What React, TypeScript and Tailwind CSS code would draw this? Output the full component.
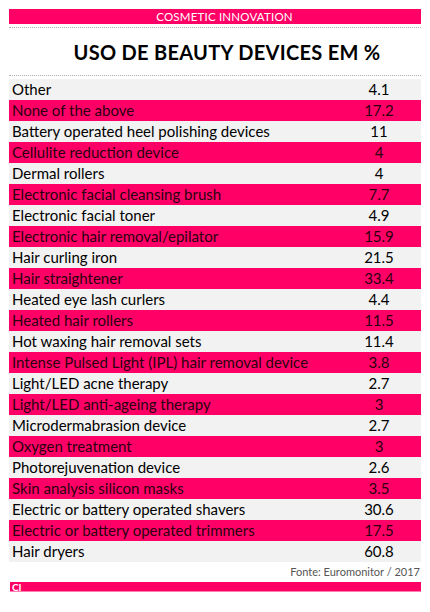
import React from "react";

const rows: [string, string][] = [
  ["Other", "4.1"],
  ["None of the above", "17.2"],
  ["Battery operated heel polishing devices", "11"],
  ["Cellulite reduction device", "4"],
  ["Dermal rollers", "4"],
  ["Electronic facial cleansing brush", "7.7"],
  ["Electronic facial toner", "4.9"],
  ["Electronic hair removal/epilator", "15.9"],
  ["Hair curling iron", "21.5"],
  ["Hair straightener", "33.4"],
  ["Heated eye lash curlers", "4.4"],
  ["Heated hair rollers", "11.5"],
  ["Hot waxing hair removal sets", "11.4"],
  ["Intense Pulsed Light (IPL) hair removal device", "3.8"],
  ["Light/LED acne therapy", "2.7"],
  ["Light/LED anti-ageing therapy", "3"],
  ["Microdermabrasion device", "2.7"],
  ["Oxygen treatment", "3"],
  ["Photorejuvenation device", "2.6"],
  ["Skin analysis silicon masks", "3.5"],
  ["Electric or battery operated shavers", "30.6"],
  ["Electric or battery operated trimmers", "17.5"],
  ["Hair dryers", "60.8"],
];

export default function App() {
  return (
    <div className="w-[430px] h-[612px] bg-white pt-[9px] px-[9px]">
      <div className="h-[15px] bg-[#ff0066] flex items-center justify-center text-white text-[11.5px] leading-none tracking-[0.2px]" style={{ fontFamily: "Lato, sans-serif" }}>
        <span className="pl-[19px]">COSMETIC INNOVATION</span>
      </div>
      <div className="mt-[3px] border-t border-dotted border-[#b0b0b0]" />
      <div className="h-[47px] flex items-center justify-center">
        <h1 className="text-[20px] font-bold text-black leading-none pl-[24px] tracking-[0.3px]" style={{ fontFamily: "Lato, sans-serif" }}>
          USO DE BEAUTY DEVICES EM %
        </h1>
      </div>
      <div className="border-t border-dotted border-[#b0b0b0]" />
      <div className="mt-[3px]" style={{ fontFamily: "Lato, sans-serif" }}>
        {rows.map(([label, value], i) => (
          <div
            key={i}
            className={`h-[21px] flex items-center text-[15px] leading-none ${
              i % 2 === 0 ? "bg-[#f2f2f2] text-black" : "bg-[#ff0066] text-[#2a0010]"
            }`}
          >
            <span className="pl-[3px] flex-1">{label}</span>
            <span className="w-[82px] text-center mr-[1px]">{value}</span>
          </div>
        ))}
      </div>
      <div className="h-[20px] flex items-center justify-end text-[11px] text-[#555] pr-[1px]" style={{ fontFamily: "Lato, sans-serif" }}>
        Fonte: Euromonitor / 2017
      </div>
      <div className="h-[10px] ml-[1px] bg-[#ff0066] border-b border-[#ff80b0] flex items-center text-white text-[10px] font-bold leading-none pl-[2px]" style={{ fontFamily: "Lato, sans-serif" }}>
        CI
      </div>
    </div>
  );
}
